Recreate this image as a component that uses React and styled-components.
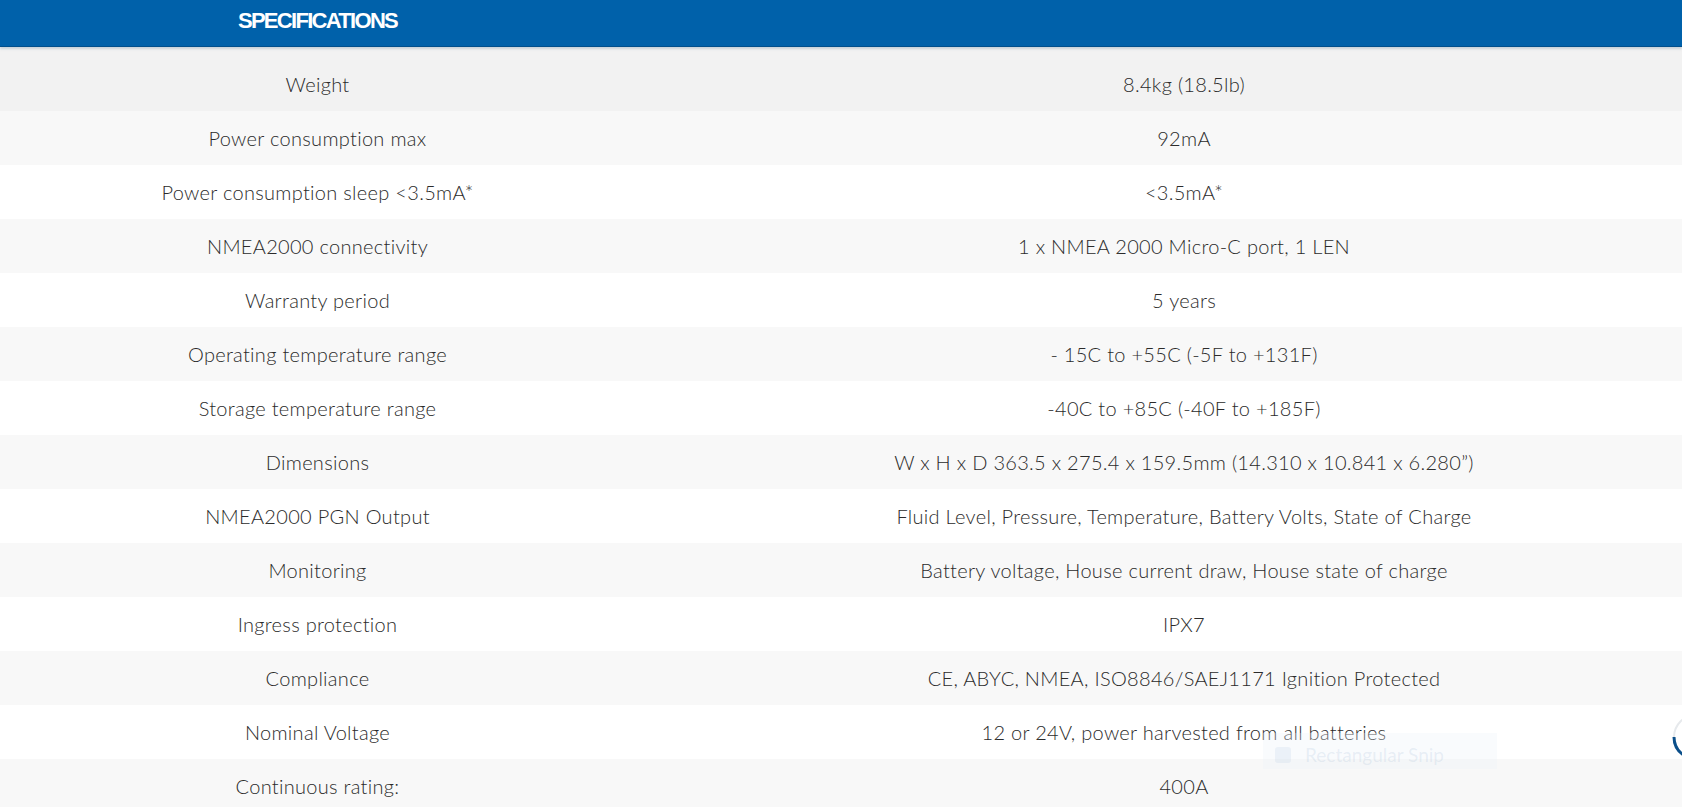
import styled, { createGlobalStyle } from "styled-components";

const specs = [
  ["Weight", "8.4kg (18.5lb)"],
  ["Power consumption max", "92mA"],
  ["Power consumption sleep <3.5mA*", "<3.5mA*"],
  ["NMEA2000 connectivity", "1 x NMEA 2000 Micro-C port, 1 LEN"],
  ["Warranty period", "5 years"],
  ["Operating temperature range", "- 15C to +55C (-5F to +131F)"],
  ["Storage temperature range", "-40C to +85C (-40F to +185F)"],
  ["Dimensions", "W x H x D 363.5 x 275.4 x 159.5mm (14.310 x 10.841 x 6.280\u201d)"],
  ["NMEA2000 PGN Output", "Fluid Level, Pressure, Temperature, Battery Volts, State of Charge"],
  ["Monitoring", "Battery voltage, House current draw, House state of charge"],
  ["Ingress protection", "IPX7"],
  ["Compliance", "CE, ABYC, NMEA, ISO8846/SAEJ1171 Ignition Protected"],
  ["Nominal Voltage", "12 or 24V, power harvested from all batteries"],
  ["Continuous rating:", "400A"],
];

const GlobalStyle = createGlobalStyle`
  html, body {
    margin: 0;
    padding: 0;
    overflow: hidden;
    background: #ffffff;
  }
  body {
    font-family: Lato, "Open Sans", sans-serif;
    color: #333333;
  }
`;

const Page = styled.div`
  position: relative;
  width: 1682px;
  height: 807px;
  overflow: hidden;
`;

const Header = styled.div`
  display: grid;
  grid-template-columns: 635px 1fr;
  height: 46px;
  background: #0061aa;
  box-shadow: 0 1px 0 #004f8c, 0 3px 2px rgba(160, 180, 195, 0.5);
  position: relative;
  z-index: 1;
`;

const Title = styled.h2`
  margin: 0;
  display: flex;
  align-items: center;
  justify-content: center;
  color: #ffffff;
  font-family: "Liberation Sans", Arial, sans-serif;
  font-weight: 700;
  font-size: 22px;
  letter-spacing: -1.7px;
  padding-bottom: 4px;
`;

const Table = styled.div`
  display: flex;
  flex-direction: column;
  padding-top: 11px;
  background: #f2f2f2;
`;

const Row = styled.div`
  display: grid;
  grid-template-columns: 635px 1098px;
  height: 54px;
  align-items: center;
  background: ${(p) => (p.$first ? "#f2f2f2" : p.$odd ? "#f8f8f8" : "#ffffff")};
`;

const Cell = styled.div`
  text-align: center;
  font-size: 20px;
  line-height: 20px;
  font-weight: 300;
  letter-spacing: 0.3px;
  color: #2b2b2b;
  white-space: nowrap;
`;

const Snip = styled.div`
  position: absolute;
  left: 1263px;
  top: 733px;
  width: 234px;
  height: 36px;
  display: flex;
  align-items: center;
  gap: 14px;
  padding: 8px 0 0 12px;
  box-sizing: border-box;
  background: rgba(235, 242, 250, 0.3);
`;

const SnipText = styled.span`
  color: rgba(120, 150, 190, 0.14);
  font-size: 19px;
  line-height: 12px;
`;

const SnipDot = styled.span`
  width: 16px;
  height: 16px;
  border-radius: 3px;
  background: rgba(120, 160, 210, 0.1);
`;

const Spinner = styled.svg`
  position: absolute;
  left: 1671px;
  top: 712px;
`;

export default function App() {
  return (
    <Page>
      <GlobalStyle />
      <Header>
        <Title>SPECIFICATIONS</Title>
      </Header>
      <Table>
        {specs.map(([label, value], i) => (
          <Row key={label} $first={i === 0} $odd={i % 2 === 1}>
            <Cell>{label}</Cell>
            <Cell>{value}</Cell>
          </Row>
        ))}
      </Table>
      <Snip>
        <SnipDot />
        <SnipText>Rectangular Snip</SnipText>
      </Snip>
      <Spinner width="50" height="50" viewBox="0 0 50 50">
        <circle cx="25" cy="25" r="22" fill="none" stroke="#e6e9ec" strokeWidth="2" />
        <path d="M3 25 A22 22 0 0 0 14 44" fill="none" stroke="#0b4f8a" strokeWidth="3" />
      </Spinner>
    </Page>
  );
}
